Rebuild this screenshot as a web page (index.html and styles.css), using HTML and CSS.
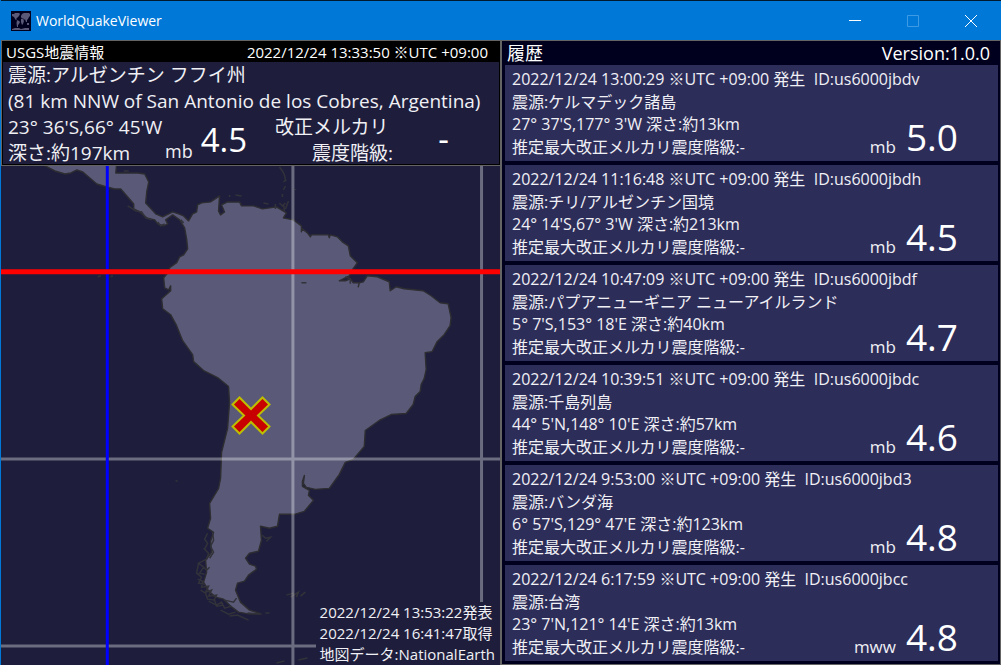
FILE: index.html
```html
<!DOCTYPE html>
<html lang="ja">
<head>
<meta charset="utf-8">
<title>WorldQuakeViewer</title>
<link rel="stylesheet" href="styles.css">
</head>
<body>
<div class="window">
  <header class="titlebar">
    <svg class="app-icon" viewBox="0 0 20 20" aria-hidden="true">
      <rect width="20" height="20" fill="#00001e"/>
      <path fill="#5a5a78" d="M1 3h2l1-1h4l1 1-1 2-1 1-1 1-1 1 1 1H5L4 8 3 6 1 5zM6 9l2 1 1 1-1 2-1 1v2H6l-.5-4zM10 5l1-2 2-1h5l1 1v2l-1 1-1 2-1 1v2h-1l-1-3-1 1-1-2-1 1-1-2zM10 8h2l1 2-1 3-1 1-1-3zM16 12h2v2h-2zM1 18l3-1h4l2 1 4-1h4v2H1z"/>
    </svg>
    <h1 class="app-title">WorldQuakeViewer</h1>
    <div class="controls">
      <button class="control" type="button" aria-label="最小化"><svg viewBox="0 0 12 12"><path d="M0 5.5h12"/></svg></button>
      <button class="control" type="button" aria-label="最大化" disabled><svg viewBox="0 0 12 12"><path d="M.5 .5h11v11H.5z"/></svg></button>
      <button class="control" type="button" aria-label="閉じる"><svg viewBox="0 0 12 12"><path d="M0 0l12 12M12 0L0 12"/></svg></button>
    </div>
  </header>
  <main class="panes">
    <section class="latest">
      <div class="info">
        <div class="info-bar"><h2 class="info-title">USGS地震情報</h2><time>2022/12/24 13:33:50 ※UTC +09:00</time></div>
        <div class="info-body">
          <p>震源:アルゼンチン フフイ州</p>
          <p>(81 km NNW of San Antonio de los Cobres, Argentina)</p>
          <div class="info-data">
            <div><p>23° 36'S,66° 45'W</p><p>深さ:約197km</p></div>
            <div class="info-mag"><span class="info-unit">mb</span><strong class="info-value">4.5</strong></div>
            <div class="mercalli"><p>改正メルカリ</p><p class="mercalli-scale">震度階級:</p></div>
            <strong class="mercalli-value">-</strong>
          </div>
        </div>
      </div>
      <div class="map">
        <svg class="map-svg" viewBox="1 165 500 500" preserveAspectRatio="xMinYMin slice" role="img" aria-label="震源地図">
          <path class="land" d="M40 162L55 170 65 173 71 172 77 169 83 171 90 177 97 183 107 186 115 188 121 188 128 196 134 203 134 208 140 211 147 217 155 219 158 223 164 225 168 223 166 219 173 214 180 219 185 227 187 238 188 248 184 254 180 256 177 262 170 267 169 271 164 277 165 287 169 289 171 285 171 290 162 298 163 308 171 314 177 325 183 340 193 354 194 361 204 370 218 377 229 386 230 402 228 428 222 452 221 478 219 488 210 503 211 518 208 528 214 532 211 541 212 552 206 560 207 572 204 582 209 591 216 597 224 599 231 606 239 612 250 614 262 614 250 610 241 602 236 590 238 583 245 581 249 575 257 569 256 566 250 564 246 558 250 553 259 551 262 540 261 526 270 528 278 526 280 514 295 514 305 511 314 500 309 495 310 490 303 486 303 481 305 475 304 483 307 487 316 489 330 488 340 474 346 462 354 459 365 446 366 430 380 420 392 414 407 413 414 404 416 396 421 391 422 384 425 378 427 369 426 352 433 351 438 341 445 334 451 325 452 317 449 303 441 302 432 295 424 290 405 288 397 286 391 290 390 281 378 276 368 275 364 281 360 282 359 286 360 282 354 282 351 278 346 280 340 280 350 275 353 269 358 262 351 255 349 245 343 241 338 236 331 234 330 237 329 234 312 234 311 236 308 232 303 228 302 231 302 225 294 219 284 217 287 212 277 206 263 208 254 205 242 205 240 201 228 201 222 204 225 211 221 214 219 210 220 195 211 201 202 202 198 204 197 211 193 213 189 220 184 215 179 213 173 211 163 216 156 213 146 202 147 191 149 181 145 173 138 172 116 172 117 162z"/>
          <path class="coast" d="M128 205l8 5 6 1 4 6 6 2M158 221l3 4 4 -2M181 219l3 3M208 533l-3 6 3 4-3 6M213 532l1 8-3 6 3 6-4 6M204 548l5 5-2 6-8 4 5 4-4 6 5 1M199 563l-2 10 5 4-3 6 6 1M203 566l4 4 3-3M198 579l5 2-1 6 7-1-3 6 6-2-3 6 8-1-3 6M201 590l5 3 2 6 7 1 2 6 7-1M209 601l8 4 5-3 3 6 7-2M221 610l8 4 7-2M230 616l8-1 11 5M225 600l9 2 3-4M263 535l3 3 5-1-4 4M287 595l7-2M291 597l8-5-2 5M301 596l5-4M277 663l8-2M299 660l9-2M248 613l13 1M266 613l4 0M98 276l3-1M111 276l2-1M176 480l2 1M280 202l3 3 3-3M264 202l5 1M276 203v5M284 203l1 7M286 208l3-8M280 166l3 4 2 4 1 5M284 181l3-2M286 185l-2 4M283 193v3M296 188v1M230 194v2M236 194l6 1M124 170l5 0M346 276l5 2 0 5M302 282l5 0"/>
          <path class="graticule" d="M0 458.5h502M0 646h502M293.500 164v502M482.500 164v502"/>
          <path class="meridian" d="M107.500 164v502"/>
          <path class="equator" d="M0 271h502"/>
          <path class="epicenter" d="M240 397L251.500 408.500 263 397 270 404 258.500 415 270 426 263 433 251.500 421.500 240 433 233 426 244.500 415 233 404z"/>
        </svg>
        <div class="map-caption"><p>2022/12/24 13:53:22発表</p><p>2022/12/24 16:41:47取得</p><p>地図データ:NationalEarth</p></div>
      </div>
    </section>
    <section class="history">
      <div class="history-bar"><h2 class="history-title">履歴</h2><span>Version:1.0.0</span></div>
      <ul class="quakes">
        <li class="quake"><p class="when">2022/12/24 13:00:29 ※UTC +09:00 発生&nbsp; ID:us6000jbdv</p><p>震源:ケルマデック諸島</p><p>27° 37'S,177° 3'W 深さ:約13km</p><p>推定最大改正メルカリ震度階級:-</p><div class="mag"><span class="unit">mb</span><strong class="value">5.0</strong></div></li>
        <li class="quake"><p class="when">2022/12/24 11:16:48 ※UTC +09:00 発生&nbsp; ID:us6000jbdh</p><p>震源:チリ/アルゼンチン国境</p><p>24° 14'S,67° 3'W 深さ:約213km</p><p>推定最大改正メルカリ震度階級:-</p><div class="mag"><span class="unit">mb</span><strong class="value">4.5</strong></div></li>
        <li class="quake"><p class="when">2022/12/24 10:47:09 ※UTC +09:00 発生&nbsp; ID:us6000jbdf</p><p>震源:パプアニューギニア ニューアイルランド</p><p>5° 7'S,153° 18'E 深さ:約40km</p><p>推定最大改正メルカリ震度階級:-</p><div class="mag"><span class="unit">mb</span><strong class="value">4.7</strong></div></li>
        <li class="quake"><p class="when">2022/12/24 10:39:51 ※UTC +09:00 発生&nbsp; ID:us6000jbdc</p><p>震源:千島列島</p><p>44° 5'N,148° 10'E 深さ:約57km</p><p>推定最大改正メルカリ震度階級:-</p><div class="mag"><span class="unit">mb</span><strong class="value">4.6</strong></div></li>
        <li class="quake"><p class="when">2022/12/24 9:53:00 ※UTC +09:00 発生&nbsp; ID:us6000jbd3</p><p>震源:バンダ海</p><p>6° 57'S,129° 47'E 深さ:約123km</p><p>推定最大改正メルカリ震度階級:-</p><div class="mag"><span class="unit">mb</span><strong class="value">4.8</strong></div></li>
        <li class="quake"><p class="when">2022/12/24 6:17:59 ※UTC +09:00 発生&nbsp; ID:us6000jbcc</p><p>震源:台湾</p><p>23° 7'N,121° 14'E 深さ:約13km</p><p>推定最大改正メルカリ震度階級:-</p><div class="mag"><span class="unit">mww</span><strong class="value">4.8</strong></div></li>
      </ul>
    </section>
  </main>
</div>
</body>
</html>
```

FILE: styles.css
```css
* { box-sizing: border-box; }
body, h1, h2, p, ul { margin: 0; padding: 0; }
h1, h2, strong { font-weight: 400; }
body {
  font-family: "Open Sans", "Noto Sans CJK JP", sans-serif;
  color: #fff;
  background: #1e1e3c;
  white-space: nowrap;
}
.window {
  display: flex;
  flex-direction: column;
  min-height: 100vh;
  border-left: 1px solid #0078d7;
}

/* Title bar */
.titlebar {
  display: flex;
  align-items: center;
  height: 40px;
  padding: 0 1px 0 10px;
  border-top: 1px solid #001a30;
  background: #0078d7;
}
.app-icon { width: 20px; height: 20px; margin-right: 5px; }
.app-title { font-size: 14px; line-height: 20px; }
.controls { display: flex; align-self: stretch; margin-left: auto; }
.control {
  display: grid;
  place-items: center;
  width: 58px;
  padding: 0;
  border: 0;
  background: none;
  color: #fff;
}
.control:disabled { color: #3d9ae4; }
.control svg {
  width: 12px;
  height: 12px;
  fill: none;
  stroke: currentColor;
  overflow: visible;
}

.panes {
  flex: 1;
  display: grid;
  grid-template-columns: 1fr 1fr;
}

/* Latest earthquake */
.latest { display: flex; flex-direction: column; border-right: 1px solid #646464; }
.info {
  padding: 1px;
  border: 1px solid #646464;
  border-right: 0;
  background: #000;
}
.info-bar {
  display: flex;
  justify-content: space-between;
  padding: 0 11px 0 3px;
  font-size: 15px;
  line-height: 20px;
}
.info-title { font-size: 15px; }
.info-body {
  padding: 0 5px;
  font-size: 19px;
  line-height: 26px;
  color: #f0f0f5;
  background: #1e1e3c;
}
.info-data { display: grid; grid-template-columns: 157px 110px 118px 1fr; height: 50px; }
.info-mag { display: flex; align-items: flex-end; gap: 8px; padding-bottom: 2px; }
.info-unit { font-size: 18px; line-height: 26px; }
.info-value { font-size: 33px; line-height: 48px; color: #fff; }
.mercalli-scale { text-align: right; }
.mercalli-value { justify-self: center; font-size: 33px; line-height: 50px; color: #fff; }

/* Map */
.map { position: relative; flex: 1; overflow: hidden; min-height: 320px; }
.map-svg { position: absolute; inset: 0; width: 100%; height: 100%; }
.land { fill: #5a5a78; stroke: #2d2d32; stroke-width: 1.4; stroke-linejoin: round; }
.coast { fill: none; stroke: #32323a; stroke-width: 1.5; }
.graticule { fill: none; stroke: #fff; stroke-opacity: 0.35; stroke-width: 3; }
.meridian { stroke: #00f; stroke-width: 3; }
.equator { stroke: #f00; stroke-width: 5; }
.epicenter { fill: #c80000; stroke: #bebe00; stroke-width: 2; }
.map-caption {
  position: absolute;
  right: 0;
  bottom: 0;
  padding: 0 5px 0 4px;
  font-size: 15px;
  line-height: 21px;
  color: #f0f0f5;
  background: #1e1e3c;
}

/* History */
.history {
  display: flex;
  flex-direction: column;
  padding: 0 2px 3px 3px;
  border: 1px solid #646464;
  background: #00001e;
}
.history-bar {
  display: flex;
  justify-content: space-between;
  padding: 0 8px 0 2px;
  font-size: 18px;
  line-height: 24px;
}
.history-title { font-size: 18px; }
.quakes {
  flex: 1;
  display: grid;
  grid-auto-rows: 1fr;
  gap: 4px;
  list-style: none;
}
.quake {
  display: grid;
  grid-template: repeat(4, 1fr) / 1fr auto;
  padding: 3px 40px 3px 7px;
  font-size: 16px;
  line-height: 22px;
  color: #f0f0f5;
  background: #2d2d5a;
}
.quake p { grid-column: 1; }
.quake .when { grid-column: 1 / 3; }
.mag {
  grid-column: 2;
  grid-row: 2 / 5;
  display: flex;
  align-items: flex-end;
  gap: 10px;
}
.unit { font-size: 17px; }
.value { font-size: 37px; line-height: 42px; color: #fff; }
```
